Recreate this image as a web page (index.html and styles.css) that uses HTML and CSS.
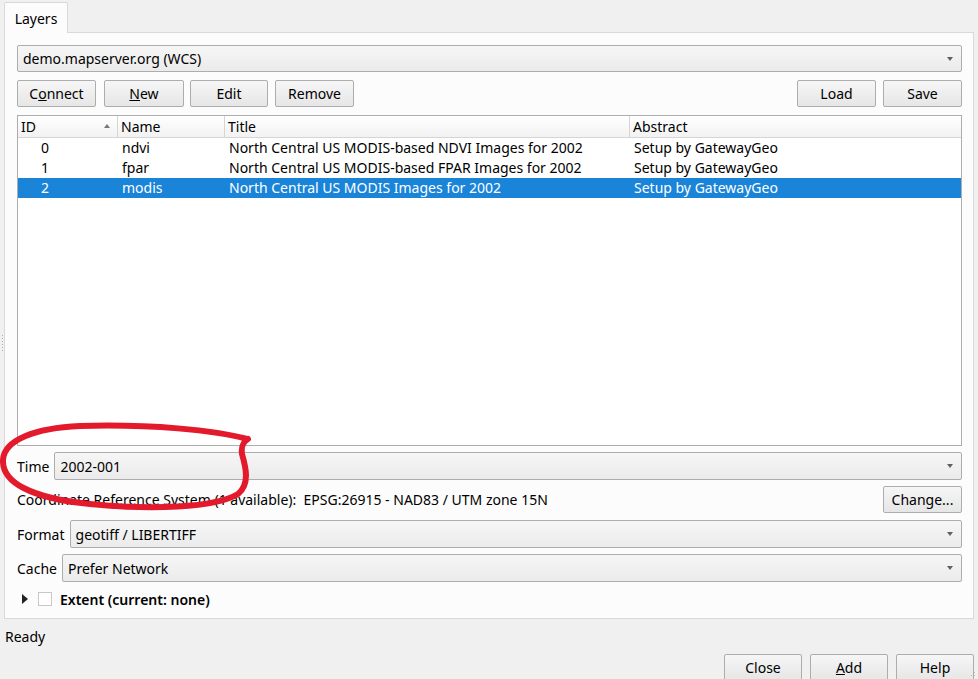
FILE: index.html
```html
<!DOCTYPE html>
<html lang="en">
<head>
    <meta charset="UTF-8">
    <title>Add Layer(s) from a WCS Server</title>
    <link rel="stylesheet" href="styles.css">
</head>
<body>
    <div class="window">
        <div class="tabbar">
            <div class="tab">Layers</div>
        </div>

        <div class="pane">
            <div class="combo">demo.mapserver.org (WCS)</div>

            <div class="btn-row">
                <button class="btn">C<u>o</u>nnect</button>
                <button class="btn"><u>N</u>ew</button>
                <button class="btn">Edit</button>
                <button class="btn">Remove</button>
                <span class="spacer"></span>
                <button class="btn">Load</button>
                <button class="btn">Save</button>
            </div>

            <div class="tree">
                <div class="tree-head">
                    <div class="col col-id">ID <span class="sort"></span></div>
                    <div class="col col-name">Name</div>
                    <div class="col col-title">Title</div>
                    <div class="col col-abstract">Abstract</div>
                </div>
                <div id="rows"></div>
            </div>

            <div class="field">
                <span class="label">Time</span>
                <div class="combo">2002-001</div>
            </div>

            <div class="crs-row">
                <span>Coordinate Reference System (1 available):&nbsp; EPSG:26915 - NAD83 / UTM zone 15N</span>
                <button class="btn">Change...</button>
            </div>

            <div class="field field-format">
                <span class="label">Format</span>
                <div class="combo">geotiff / LIBERTIFF</div>
            </div>

            <div class="field field-cache">
                <span class="label">Cache</span>
                <div class="combo">Prefer Network</div>
            </div>

            <div class="extent">
                <span class="arrow"></span>
                <span class="check"></span>
                <span class="extent-title">Extent (current: none)</span>
            </div>
        </div>

        <div class="status">Ready</div>

        <div class="dialog-buttons">
            <button class="btn">Close</button>
            <button class="btn"><u>A</u>dd</button>
            <button class="btn">Help</button>
        </div>

        <div class="grip"></div>
        <div class="splitter"></div>

        <!-- hand-drawn highlight around the Time field -->
        <svg class="scribble" width="260" height="110" viewBox="0 0 260 110">
            <path d="M247 19 C215 10 150 4 80 6 C35 8 4 20 3 40 C2 62 30 78 90 84 C150 90 215 88 238 74 C250 64 246 48 242 34 C241 26 243 22 248 19"
                  fill="none" stroke="#e31a2c" stroke-width="6" stroke-linecap="round" stroke-linejoin="round"/>
        </svg>
    </div>

    <script>
        const layers = [
            { id: 0, name: "ndvi", title: "North Central US MODIS-based NDVI Images for 2002", abstract: "Setup by GatewayGeo" },
            { id: 1, name: "fpar", title: "North Central US MODIS-based FPAR Images for 2002", abstract: "Setup by GatewayGeo" },
            { id: 2, name: "modis", title: "North Central US MODIS Images for 2002", abstract: "Setup by GatewayGeo", selected: true }
        ];

        const rows = document.getElementById('rows');
        layers.forEach(layer => {
            const row = document.createElement('div');
            row.className = layer.selected ? 'row selected' : 'row';
            row.innerHTML = `
                <div class="col col-id">${layer.id}</div>
                <div class="col col-name">${layer.name}</div>
                <div class="col col-title">${layer.title}</div>
                <div class="col col-abstract">${layer.abstract}</div>
            `;
            rows.appendChild(row);
        });
    </script>
</body>
</html>
```

FILE: styles.css
```css
body {
    margin: 0;
    padding: 0;
    background-color: #f0f0f0;
    font-family: 'Noto Sans', 'Open Sans', sans-serif;
    font-size: 14px;
    color: #000;
}
.window {
    position: relative;
    width: 978px;
    height: 679px;
    overflow: hidden;
}
.tabbar {
    display: flex;
    padding: 2px 0 0 4px;
    height: 30px;
}
.tab {
    width: 62px;
    height: 30px;
    line-height: 32px;
    text-align: center;
    background: #fcfcfc;
    border: 1px solid #d9d9d9;
    border-bottom: none;
    border-radius: 2px 2px 0 0;
    position: relative;
    z-index: 1;
}
.pane {
    margin: 0 4px 0 4px;
    height: 573px;
    background: #fcfcfc;
    border: 1px solid #d9d9d9;
    padding: 12px 11px 0 12px;
    display: flex;
    flex-direction: column;
}
.combo {
    position: relative;
    height: 25px;
    line-height: 26px;
    padding: 0 5px;
    border: 1px solid #adadad;
    border-radius: 2px;
    background: linear-gradient(#f6f6f6, #ebebeb);
    flex: 1;
    white-space: nowrap;
}
.combo::after {
    content: "";
    position: absolute;
    right: 8px;
    top: 11px;
    border-left: 3.5px solid transparent;
    border-right: 3.5px solid transparent;
    border-top: 4px solid #606060;
}
.pane > .combo {
    flex: none;
}
.btn {
    font-family: inherit;
    font-size: 14px;
    color: #000;
    height: 27px;
    width: 79px;
    padding: 0;
    border: 1px solid #adadad;
    border-radius: 2px;
    background: linear-gradient(#f6f6f6, #e6e6e6);
}
.btn-row {
    display: flex;
    margin-top: 8px;
    gap: 7px;
}
.btn-row .btn:nth-child(2) { width: 80px; margin-left: 1px; }
.btn-row .btn:nth-child(3) { width: 78px; margin-left: -1px; }
.spacer {
    flex: 1;
}
.tree {
    margin-top: 8px;
    height: 329px;
    border: 1px solid #adadad;
    background: #fff;
}
.tree-head {
    display: flex;
    height: 21px;
    line-height: 22px;
    background: linear-gradient(#ffffff, #f2f2f2);
    border-bottom: 1px solid #d5d5d5;
}
.tree-head .col {
    border-right: 1px solid #d5d5d5;
    padding-left: 3px;
}
.tree-head .col-abstract {
    border-right: none;
}
.col {
    box-sizing: border-box;
    white-space: nowrap;
    overflow: hidden;
    position: relative;
}
.col-id { width: 100px; }
.col-name { width: 107px; }
.col-title { width: 405px; }
.col-abstract { flex: 1; }
.sort {
    position: absolute;
    left: 86px;
    top: 8px;
    border-left: 3.5px solid transparent;
    border-right: 3.5px solid transparent;
    border-bottom: 4px solid #777;
}
.row {
    display: flex;
    height: 20px;
    line-height: 20px;
}
.row .col {
    padding-left: 4px;
}
.row .col-id {
    padding-left: 23px;
}
.row.selected {
    background: #1a84d9;
    color: #fff;
}
.field {
    display: flex;
    align-items: center;
    margin-top: 6px;
    gap: 5px;
}
.field .combo {
    height: 26px;
    line-height: 27px;
}
.field-format {
    margin-top: 7px;
}
.field-cache {
    margin-top: 6px;
}
.crs-row {
    display: flex;
    align-items: center;
    justify-content: space-between;
    margin-top: 6px;
}
.extent {
    display: flex;
    align-items: center;
    height: 20px;
    margin-top: 7px;
    padding-left: 5px;
}
.arrow {
    border-top: 5px solid transparent;
    border-bottom: 5px solid transparent;
    border-left: 6px solid #222;
    margin-right: 10px;
}
.check {
    width: 12px;
    height: 12px;
    border: 1px solid #c8c8c8;
    background: #fff;
    margin-right: 8px;
}
.extent-title {
    font-weight: 600;
}
.status {
    padding: 8px 0 0 5px;
    height: 20px;
}
.dialog-buttons {
    display: flex;
    justify-content: flex-end;
    gap: 8px;
    margin-top: 7px;
    padding-right: 4px;
}
.dialog-buttons .btn {
    width: 78px;
}
.grip {
    position: absolute;
    right: 1px;
    bottom: 1px;
    width: 10px;
    height: 10px;
    background: radial-gradient(circle, #bcbcbc 0.8px, transparent 1px) 0 0 / 3px 3px;
    clip-path: polygon(100% 0, 100% 100%, 0 100%);
}
.splitter {
    position: absolute;
    left: 1px;
    top: 334px;
    width: 3px;
    height: 18px;
    background: radial-gradient(circle, #b0b0b0 0.8px, transparent 1px) 0 0 / 3px 3px;
}
.scribble {
    position: absolute;
    left: 0;
    top: 420px;
    pointer-events: none;
}
```
